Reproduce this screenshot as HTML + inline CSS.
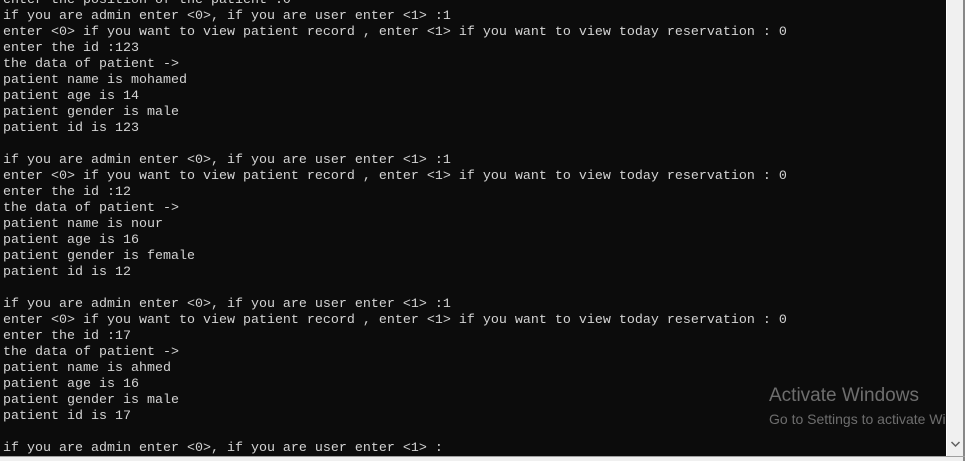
<!DOCTYPE html>
<html><head><style>
html,body{margin:0;padding:0;width:965px;height:461px;overflow:hidden;background:#f0f0f0}
#con{position:absolute;left:0;top:0;width:946px;height:456px;background:#0c0c0c;overflow:hidden}
pre{margin:0;position:absolute;left:3px;top:-7px;font-family:"Liberation Mono",monospace;font-size:13.33px;line-height:16px;color:#d4d4d4;letter-spacing:0}
#sb{position:absolute;left:946px;top:0;width:17px;height:456px;background:#f0f0f0;border-left:1px solid #fff}
#edge{position:absolute;left:963px;top:0;width:2px;height:461px;background:#888}
#bot{position:absolute;left:0;top:456px;width:965px;height:1px;background:#a0a0a0}
.aw{position:absolute;left:769px;top:385px;font-family:"Liberation Sans",sans-serif;font-size:19px;color:#6e6e6e;white-space:nowrap}
.aw2{position:absolute;left:769px;top:411px;font-family:"Liberation Sans",sans-serif;font-size:14px;color:#6e6e6e;white-space:nowrap}
</style></head><body>
<div id="con">
<pre>enter the position of the patient :0
if you are admin enter &lt;0&gt;, if you are user enter &lt;1&gt; :1
enter &lt;0&gt; if you want to view patient record , enter &lt;1&gt; if you want to view today reservation : 0
enter the id :123
the data of patient -&gt;
patient name is mohamed
patient age is 14
patient gender is male
patient id is 123

if you are admin enter &lt;0&gt;, if you are user enter &lt;1&gt; :1
enter &lt;0&gt; if you want to view patient record , enter &lt;1&gt; if you want to view today reservation : 0
enter the id :12
the data of patient -&gt;
patient name is nour
patient age is 16
patient gender is female
patient id is 12

if you are admin enter &lt;0&gt;, if you are user enter &lt;1&gt; :1
enter &lt;0&gt; if you want to view patient record , enter &lt;1&gt; if you want to view today reservation : 0
enter the id :17
the data of patient -&gt;
patient name is ahmed
patient age is 16
patient gender is male
patient id is 17

if you are admin enter &lt;0&gt;, if you are user enter &lt;1&gt; :</pre>
<div class="aw">Activate Windows</div>
<div class="aw2">Go to Settings to activate Windows.</div>
</div>
<div id="sb">
<svg style="position:absolute;left:3px;top:440px" width="11" height="8" viewBox="0 0 11 8"><path d="M1.5 2 L5.5 6 L9.5 2" stroke="#606060" stroke-width="1.5" fill="none"/></svg>
</div>
<div id="edge"></div>
<div id="bot"></div>
</body></html>
